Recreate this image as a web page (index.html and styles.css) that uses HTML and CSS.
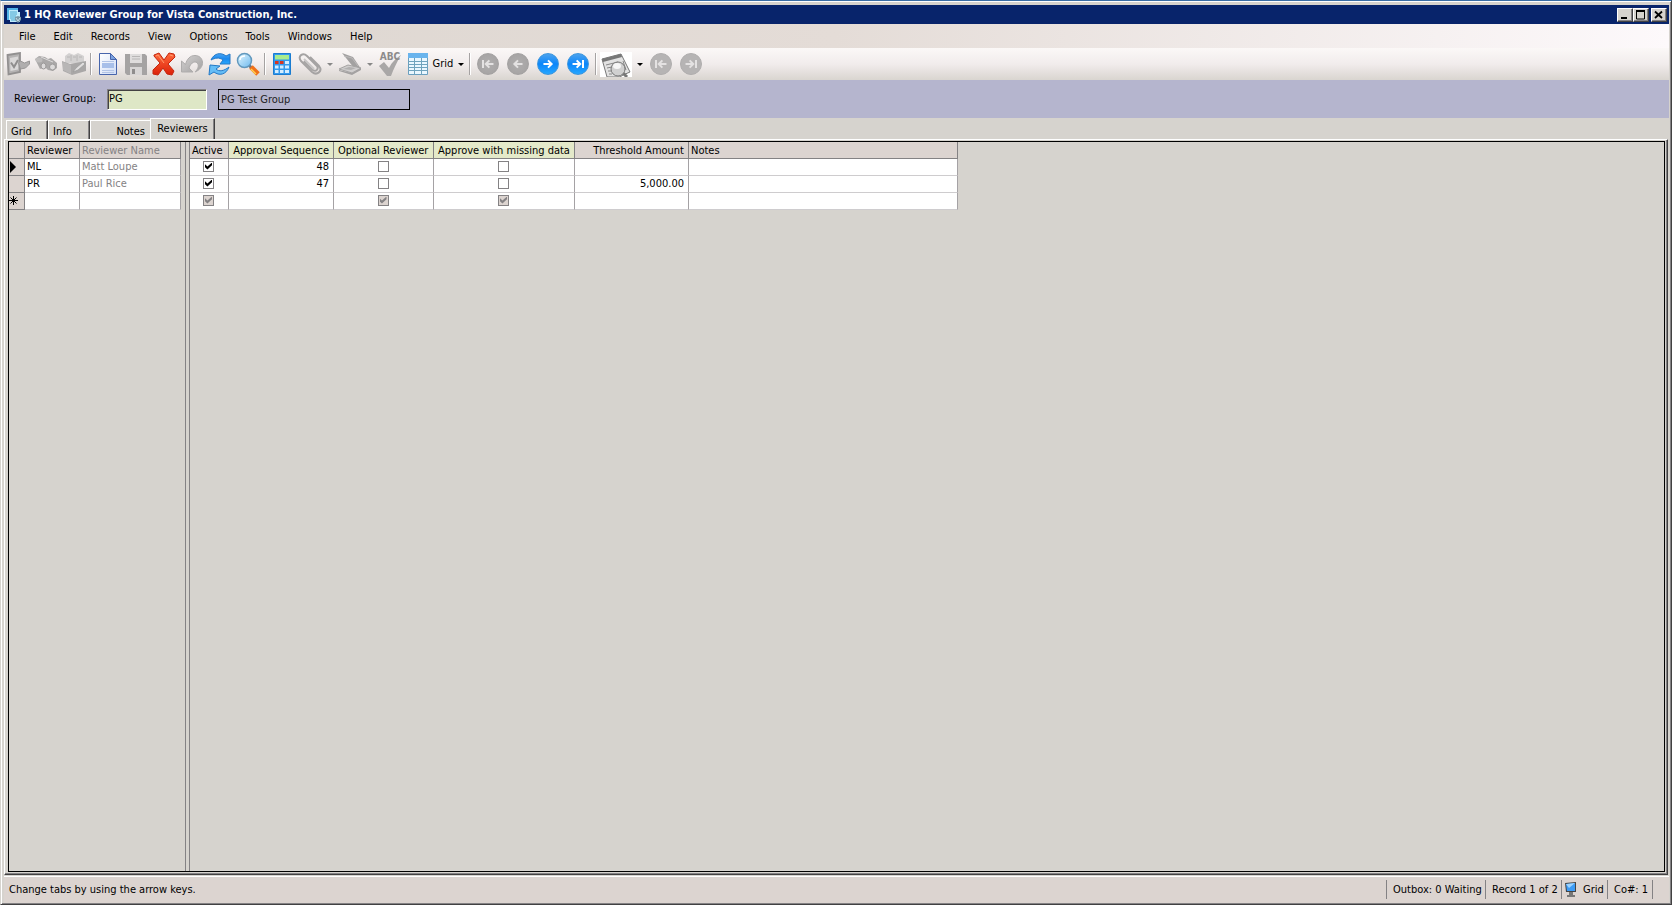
FILE: index.html
```html
<!DOCTYPE html>
<html lang="en">
<head>
<meta charset="utf-8">
<title>1 HQ Reviewer Group for Vista Construction, Inc.</title>
<link rel="stylesheet" href="styles.css">
</head>
<body>
<svg class="defs" aria-hidden="true">
  <defs>
    <linearGradient id="steel" x1="0" y1="0" x2="1" y2="1"><stop offset="0" stop-color="#d2d0d0"/><stop offset="1" stop-color="#a3a1a1"/></linearGradient>
    <linearGradient id="azure" x1="0" y1="0" x2="0" y2="1"><stop offset="0" stop-color="#4aa6f5"/><stop offset=".5" stop-color="#1a88ee"/><stop offset="1" stop-color="#27a8ff"/></linearGradient>
    <linearGradient id="sky" x1="0" y1="0" x2="1" y2="1"><stop offset="0" stop-color="#e4f7ff"/><stop offset="1" stop-color="#6db9ee"/></linearGradient>
    <linearGradient id="paper" x1="0" y1="0" x2="1" y2="1"><stop offset="0" stop-color="#fff"/><stop offset="1" stop-color="#cfdcf5"/></linearGradient>
    <linearGradient id="red" x1="0" y1="0" x2="0" y2="1"><stop offset="0" stop-color="#ff6b3d"/><stop offset="1" stop-color="#dc2008"/></linearGradient>
    <symbol id="to-first" viewBox="0 0 22 22"><path d="M5.500 6.500v9M17 11H9M12.500 7l-4 4 4 4" fill="none" stroke="currentColor" stroke-width="2.200"/></symbol>
    <symbol id="to-last" viewBox="0 0 22 22"><path d="M16.500 6.500v9M5 11h8M9.500 7l4 4-4 4" fill="none" stroke="currentColor" stroke-width="2.200"/></symbol>
  </defs>
</svg>
<div class="window">
  <header class="titlebar">
    <svg class="app-icon" viewBox="0 0 16 16" aria-hidden="true"><path d="M1 1h11v4h2v10H4v-2H1z" fill="#bfeafb"/><path d="M1 1h11v2H1zM1 1h2v12H1z" fill="#52b4e6"/><path d="M4 5h7M4 7h7M4 9h6M4 11h5M5 13h5" stroke="#4ba8cf"/><path d="M9 10l3-1 3 1v3l-3 3-3-3z" fill="#7797a8"/><path d="M10 11l2 3 2-3" stroke="#c7e1ec" fill="none"/></svg>
    <h1 class="title">1 HQ Reviewer Group for Vista Construction, Inc.</h1>
    <div class="window-buttons">
      <button class="win-btn" aria-label="Minimize"><svg viewBox="0 0 12 10"><path d="M2 8h6" stroke="#000" stroke-width="2"/></svg></button>
      <button class="win-btn" aria-label="Maximize"><svg viewBox="0 0 12 10"><path d="M1.500 1h8v8h-8z" fill="none" stroke="#000"/><path d="M1 1h9" stroke="#000" stroke-width="2"/></svg></button>
      <button class="win-btn close" aria-label="Close"><svg viewBox="0 0 12 10"><path d="M2 1.500l7 6.500M9 1.500L2 8" stroke="#000" stroke-width="1.800"/></svg></button>
    </div>
  </header>
  <nav class="menubar">
    <button>File</button><button>Edit</button><button>Records</button><button>View</button><button>Options</button><button>Tools</button><button>Windows</button><button>Help</button>
  </nav>
  <div class="toolbar" role="toolbar">
    <button class="tool" aria-label="Post"><svg viewBox="0 0 24 24"><path d="M1.500 3L14 1v19L2.500 22.500z" fill="#b5b3b3" stroke="#929090" stroke-width="1.800"/><path d="M4 6l8-1.500v13L4.500 19z" fill="#dad8d8"/><path d="M5 10.500l3 4.500 4-7" fill="none" stroke="#8f8d8d" stroke-width="2"/><path d="M23.500 9l-5 2-4-2-2 2 2 6 5-1 4-4z" fill="#b0aeae" stroke="#989696"/></svg></button>
    <button class="tool" aria-label="Find"><svg viewBox="0 0 24 24"><path d="M1 7l4-3 6 1 3 2 3-1 6 5v5l-4 3-5-1-3-3-5 2-2-4z" fill="#aaa8a8"/><ellipse cx="5" cy="8" rx="3.500" ry="2.500" fill="#bebcbc"/><ellipse cx="9.500" cy="14" rx="2.500" ry="3" fill="#dcdada" stroke="#9a9898"/><ellipse cx="18.500" cy="15" rx="3" ry="3" fill="#dcdada" stroke="#9a9898"/><path d="M7 5l7 3 5 2" stroke="#dddbdb" fill="none"/></svg></button>
    <button class="tool" aria-label="Records"><svg viewBox="0 0 24 24"><path d="M3 11V4l4-3 5 2 4-2 6 3v8z" fill="#d3d1d1"/><path d="M5 5h3M11 5h3M17 5h3M9 3v6M15 3v6" stroke="#b8b6b6"/><path d="M0 9l8 3 16-3v10l-14 4-9-4z" fill="#a9a7a7"/><path d="M1 10l8 3v9l-8-4z" fill="#b8b6b6"/><path d="M11 20l3-4 7-6 2 2-7 6z" fill="#e0dede" stroke="#999" stroke-width=".7"/></svg></button>
    <span class="sep"></span>
    <button class="tool" aria-label="New"><svg viewBox="0 0 24 24"><path d="M3.500 1.500h11l6 6v15h-17z" fill="url(#paper)" stroke="#4765ac"/><path d="M14.500 1.500v6h6z" fill="#7ba1df" stroke="#4765ac"/><path d="M6 9.500h12M6 18.500h12M6 20.500h12" stroke="#b2c4e6"/><path d="M6 11h12v5H6z" fill="#a7bfe9"/></svg></button>
    <button class="tool" aria-label="Save"><svg viewBox="0 0 24 24"><path d="M1 2h20l2 2v19H3l-2-2z" fill="#a5a3a3"/><path d="M6 2h12v9H6z" fill="#dfdddd"/><path d="M8 4.500h8M8 7h8" stroke="#b8b6b6"/><path d="M6 15h12v8H6z" fill="#d8d6d6"/><path d="M8 17h3v5H8z" fill="#8f8d8d"/></svg></button>
    <button class="tool" aria-label="Delete"><svg viewBox="0 0 24 24"><path d="M2 3l5-2 5 7 5-7 5 1 1 3-7 7 6 7-2 4-5-1-4-6-5 7-5-1v-4l7-7-6-7z" fill="url(#red)" stroke="#c3270f"/><path d="M4 4l2-1 6 8M18 3l3 1" fill="none" stroke="#ff9b70"/></svg></button>
    <button class="tool" aria-label="Undo"><svg viewBox="0 0 24 24"><path d="M1.500 9v11h11.500l-4-4C11 10 16 8 18 12c1 3-1 6-3 8 5-2 8-6 7.500-10C22 6 19 3.500 15 3.500 10 3.500 7 7 5.500 12.500z" fill="url(#steel)" stroke="#aeacac"/></svg></button>
    <button class="tool" aria-label="Refresh"><svg viewBox="0 0 24 24"><path d="M3 8c3-7 10-8 15-4l4-2v10H12l3-4c-4-3-8-2-12 0z" fill="url(#azure)" stroke="#2479c6"/><path d="M21 15c-3 8-10 9-15 5l-5 3 1-10 10 1-4 3c3 3 8 2 13-2z" fill="#65bdf6" stroke="#2479c6"/></svg></button>
    <button class="tool" aria-label="Search"><svg viewBox="0 0 24 24"><path d="M12 12l9 10" stroke="#73777d" stroke-width="3"/><path d="M15 15l7 7" stroke="#f07018" stroke-width="5"/><path d="M15 17l5 5" stroke="#ffd050" stroke-width="1.500"/><circle cx="8.500" cy="8.500" r="7" fill="url(#sky)" stroke="#6298bd" stroke-width="1.500"/><path d="M4 8c0-3 3-4 5-4" fill="none" stroke="#fff" stroke-width="1.500"/></svg></button>
    <span class="sep"></span>
    <button class="tool" aria-label="Calculator"><svg viewBox="0 0 24 24"><path d="M3.500 1.500h17v21h-17z" fill="#3399ec" stroke="#1b7cd0"/><path d="M5 3h14v4.500H5z" fill="#a9ec8d"/><path d="M5 9h3.500v3H5z" fill="#d83520"/><path d="M10 9h3.500v3H10z" fill="#d83520"/><path d="M15 9h4v3h-4zM5 13.500h3.500v3H5zM10 13.500h3.500v3H10zM15 13.500h4v3h-4zM5 18h3.500v3H5zM10 18h3.500v3H10zM15 18h4v3h-4z" fill="#d4edff"/></svg></button>
    <button class="tool" aria-label="Attachments"><svg viewBox="0 0 24 24"><path d="M6 9l9 9c3 2 6-1 4-4L9 4C5 0-1 4 3 9l11 11c5 4 11-1 7-6L12 5" fill="none" stroke="#a5a3a3" stroke-width="2"/><path d="M6 7l10 10" stroke="#c9c7c7" stroke-width="2"/></svg></button>
    <button class="drop dim" aria-label="Attachment options"></button>
    <button class="tool" aria-label="Scan"><svg viewBox="0 0 24 24"><path d="M4 1l11 4 8 12-7-1z" fill="#a3a1a1"/><path d="M6 4l8 2 6 8" stroke="#bbb9b9" fill="none"/><path d="M1 17l9-4 13 3-9 5z" fill="#cfcdcd" stroke="#a5a3a3"/><path d="M5 17l6-2 7 1-5 2z" fill="#b2b0b0"/><path d="M1 18l13 3 9-5v2l-9 5-13-4z" fill="#a3a1a1"/></svg></button>
    <button class="drop dim" aria-label="Scan options"></button>
    <button class="tool spell" aria-label="Spelling"><svg viewBox="0 0 24 24"><path d="M1 14l5-4 5 6C14 10 18 6 23 3c-4 7-7 13-10 21H9z" fill="#a9a7a7"/></svg><span>ABC</span></button>
    <button class="tool gridtool"><svg viewBox="0 0 24 24"><path d="M2.500 2.500h19v20h-19z" fill="#e9f7ff" stroke="#6a9fbf"/><path d="M2 1h20v5H2z" fill="#69b4ed"/><path d="M2 9.500h20M2 12.500h20M2 15.500h20M2 18.500h20M8.500 6v17M15.500 6v17" stroke="#6fa3bd"/></svg><span>Grid</span></button>
    <button class="drop" aria-label="Grid options"></button>
    <span class="sep"></span>
    <button class="round" aria-label="First"><svg><use href="#to-first"/></svg></button>
    <button class="round" aria-label="Previous"><svg viewBox="0 0 22 22"><path d="M16 11H7.500M11 7l-4 4 4 4" fill="none" stroke="currentColor" stroke-width="2.200"/></svg></button>
    <button class="round live" aria-label="Next"><svg viewBox="0 0 22 22"><path d="M6 11h8.500M11 7l4 4-4 4" fill="none" stroke="currentColor" stroke-width="2.200"/></svg></button>
    <button class="round live" aria-label="Last"><svg><use href="#to-last"/></svg></button>
    <span class="sep"></span>
    <button class="preview" aria-label="Preview"><svg viewBox="0 0 32 25"><path d="M2 7l19-5 9 18-7 3-3 2H7z" fill="#e2e2e2" stroke="#777"/><path d="M2 7l19-5 1 3-19 5z" fill="#777"/><path d="M6 13l12-3M7 16l5-1M8 19h4M9 22h3M23 9l3 9" stroke="#888"/><path d="M23 21l4 4" stroke="#777" stroke-width="3"/><circle cx="18" cy="17" r="7" fill="#d0d0d0" stroke="#777"/><ellipse cx="17" cy="14" rx="4" ry="3" fill="#f6f6f6"/></svg></button>
    <button class="drop" aria-label="Preview options"></button>
    <button class="round faint" aria-label="First page"><svg><use href="#to-first"/></svg></button>
    <button class="round faint" aria-label="Last page"><svg><use href="#to-last"/></svg></button>
  </div>
  <form class="keybar">
    <label for="group">Reviewer Group:</label>
    <input id="group" class="key" value="PG">
    <input class="desc" aria-label="Group description" value="PG Test Group" readonly>
  </form>
  <div class="tabs" role="tablist">
    <button class="tab" role="tab">Grid</button><button class="tab" role="tab">Info</button><button class="tab notes" role="tab">Notes</button><button class="tab current" role="tab" aria-selected="true">Reviewers</button>
  </div>
  <main class="panel">
    <div class="sheet">
      <table class="fixed-cols">
        <colgroup><col class="w-mark"><col class="w-rev"><col class="w-name"></colgroup>
        <thead><tr><th></th><th>Reviewer</th><th class="muted">Reviewer Name</th></tr></thead>
        <tbody>
          <tr><td class="mark"><svg viewBox="0 0 14 16"><path d="M1 2l6 6-6 6z"/></svg></td><td>ML</td><td class="muted">Matt Loupe</td></tr>
          <tr><td class="mark"></td><td>PR</td><td class="muted">Paul Rice</td></tr>
          <tr><td class="mark"><svg viewBox="0 0 14 16"><path d="M4.500 3v9M0 7.500h9M1.500 4.500l6 6M7.500 4.500l-6 6" stroke="#000" fill="none"/></svg></td><td></td><td></td></tr>
        </tbody>
      </table>
      <div class="splitter"></div>
      <table class="scroll-cols">
        <colgroup><col class="w-act"><col class="w-seq"><col class="w-opt"><col class="w-app"><col class="w-thr"><col class="w-note"></colgroup>
        <thead><tr><th>Active</th><th class="key-col num">Approval Sequence</th><th class="key-col">Optional Reviewer</th><th class="key-col mid">Approve with missing data</th><th class="num">Threshold Amount</th><th>Notes</th></tr></thead>
        <tbody>
          <tr><td class="mid"><input type="checkbox" aria-label="Active" checked></td><td class="num">48</td><td class="mid"><input type="checkbox" aria-label="Optional Reviewer"></td><td class="mid"><input type="checkbox" aria-label="Approve with missing data"></td><td></td><td></td></tr>
          <tr><td class="mid"><input type="checkbox" aria-label="Active" checked></td><td class="num">47</td><td class="mid"><input type="checkbox" aria-label="Optional Reviewer"></td><td class="mid"><input type="checkbox" aria-label="Approve with missing data"></td><td class="num">5,000.00</td><td></td></tr>
          <tr><td class="mid"><input type="checkbox" aria-label="Active" checked disabled></td><td></td><td class="mid"><input type="checkbox" aria-label="Optional Reviewer" checked disabled></td><td class="mid"><input type="checkbox" aria-label="Approve with missing data" checked disabled></td><td></td><td></td></tr>
        </tbody>
      </table>
    </div>
  </main>
  <footer class="status">
    <span class="hint">Change tabs by using the arrow keys.</span>
    <span class="cell outbox">Outbox: 0 Waiting</span>
    <span class="cell record">Record 1 of 2</span>
    <span class="cell mode"><svg viewBox="0 0 12 16" aria-hidden="true"><path d="M0 1l11-1v10H1z" fill="#444"/><path d="M1 2l9-1v8H2z" fill="#3c9bf5"/><path d="M1 2l9-1-6 5z" fill="#9cd3ff"/><path d="M4 10h4v3h2v2H2v-2h2z" fill="#777"/></svg>Grid</span>
    <span class="cell co">Co#: 1</span>
    <span class="cell grip"></span>
  </footer>
</div>
</body>
</html>
```
FILE: styles.css
```css
* { box-sizing: border-box; }
html, body { height: 100%; }
body {
  margin: 0;
  background: #d6d3ce;
  color: #000;
  font: 11px/14px "DejaVu Sans Condensed", "Noto Sans", sans-serif;
}
button, input { font: inherit; color: inherit; margin: 0; padding: 0; border: 0; background: none; border-radius: 0; }
svg { display: block; }
.defs { position: absolute; width: 0; height: 0; }

.window {
  min-height: 100vh;
  display: flex;
  flex-direction: column;
  border-top: 1px solid #3a6ea5;
  border-left: 1px solid #d6d3ce;
  border-right: 1px solid #424142;
  border-bottom: 1px solid #424142;
  padding: 3px 2px 1px;
  box-shadow: inset 1px 1px #fff, inset -1px -1px #848284;
}

.titlebar {
  display: flex;
  align-items: center;
  height: 19px;
  margin: 1px 0 0 1px;
  padding: 0 2px;
  background: #08246b;
  color: #fff;
}
.app-icon { width: 16px; height: 16px; margin-right: 2px; }
.title { margin: 0; flex: 1; font-size: 11px; line-height: 14px; font-weight: bold; }
.window-buttons { display: flex; }
.win-btn {
  width: 16px; height: 14px;
  display: flex; align-items: center; justify-content: center;
  background: #d6d3ce;
  border: 1px solid;
  border-color: #fff #424142 #424142 #fff;
  box-shadow: inset -1px -1px #848284;
}
.win-btn svg { width: 12px; height: 10px; }
.close { margin-left: 2px; }

.menubar {
  display: flex;
  height: 24px;
  margin-left: 1px;
  padding-left: 6px;
  background: linear-gradient(90deg, #dcd6d0, #e4dcd7 50%, #fdf9fb);
}
.menubar button { padding: 1px 9px 0; }

.toolbar {
  display: flex;
  align-items: center;
  height: 32px;
  margin-left: 1px;
  background: linear-gradient(#fbf8f7, #f1ecec 50%, #d9d5d0);
}
.tool { width: 28px; height: 28px; display: flex; align-items: center; justify-content: center; }
.tool svg { width: 24px; height: 24px; flex: none; }
.sep { width: 2px; height: 22px; margin: 0 2px; background: #a5a2a2; border-right: 1px solid #fff; }
.drop { width: 12px; height: 24px; display: flex; align-items: center; justify-content: center; }
.drop::before { content: ""; border: 3px solid transparent; border-top-color: #000; border-bottom: 0; }
.dim::before { border-top-color: #888; }
.spell { display: grid; place-items: center; }
.spell span, .spell svg { grid-area: 1 / 1; }
.spell span { align-self: start; color: #8d8b8b; font-size: 10px; line-height: 14px; font-weight: bold; }
.gridtool { width: 51px; gap: 3px; }
.round { width: 30px; height: 28px; display: flex; align-items: center; justify-content: center; color: #e4e2e2; }
.round svg { width: 22px; height: 22px; border-radius: 50%; background: radial-gradient(#b0aeae, #a3a1a1); border: 1px solid #a3a1a1; }
.live { color: #fff; }
.live svg { background: linear-gradient(#4ba2ee, #0b86fa 50%, #25a6ff); border-color: #3b95dd; }
.faint svg { background: #b6b4b4; border-color: #b0aeae; }
.preview { padding: 0 2px 0 1px; }
.preview svg { width: 32px; height: 25px; background: #fff; }

.keybar {
  display: flex;
  align-items: center;
  height: 38px;
  margin-left: 1px;
  padding-left: 10px;
  background: #b5b5ce;
}
.keybar label { width: 93px; }
.key {
  width: 100px; height: 21px;
  padding: 0 1px 2px;
  background: #dee7c6;
  border: 1px solid;
  border-color: #848284 #fff #fff #848284;
  box-shadow: inset 1px 1px #424142;
}
.desc { width: 192px; height: 21px; margin-left: 11px; padding: 0 2px; border: 1px solid #000; color: #222; }

.tabs { display: flex; align-items: flex-end; height: 21px; padding-left: 3px; }
.tab {
  height: 19px;
  width: 42px;
  padding: 3px 0 0 4px;
  text-align: left;
  border-top: 1px solid #fff;
  border-left: 1px solid #fff;
  border-right: 1px solid #424142;
  box-shadow: inset -1px 0 #848284;
}
.notes { width: 60px; padding: 3px 5px 0 0; text-align: right; border-right: 0; box-shadow: none; }
.current { height: 21px; width: 65px; padding: 0; text-align: center; }

.panel {
  flex: 1;
  display: flex;
  margin: 0 1px 0 1px;
  padding: 1px 2px 2px 3px;
  border: 1px solid;
  border-color: #fff #424142 #424142 #fff;
  box-shadow: inset -1px -1px #848284;
}
.sheet { flex: 1; display: flex; border: 1px solid #000; align-items: stretch; }
.splitter { width: 5px; margin-left: 4px; border: 1px solid #848284; border-width: 0 1px; }
table { border-collapse: separate; border-spacing: 0; table-layout: fixed; align-self: flex-start; }
.fixed-cols { width: 172px; }
.scroll-cols { width: 768px; }
.w-mark { width: 16px; }
.w-rev { width: 55px; }
.w-name { width: 101px; }
.w-act { width: 39px; }
.w-seq { width: 105px; }
.w-opt { width: 100px; }
.w-app { width: 141px; }
.w-thr { width: 114px; }
.w-note { width: 269px; }
th, td { height: 17px; padding: 0 2px; line-height: 14px; text-align: left; white-space: nowrap; font-weight: normal; }
th { padding-top: 1px; background: #dcd4d0; border-right: 1px solid #848284; border-bottom: 1px solid #848284; }
td { background: #fff; border-right: 1px solid #a5a2a5; border-bottom: 1px solid #ceccce; }
.key-col { background: #e4e9c9; padding: 1px 4px 0; }
.muted { color: #848284; }
.num { text-align: right; padding-left: 4px; padding-right: 4px; }
.mid { text-align: center; }
.mark { padding: 0; background: #dcd4d0; border-color: #848284; }
.mark svg { width: 14px; height: 16px; }
td input {
  appearance: none;
  display: block;
  width: 11px; height: 11px;
  margin: 0 auto 2px;
  border: 1px solid #848284;
  background: #fff;
}
td.mid { padding: 0 3px 0 2px; }
td input:checked::before {
  content: "";
  display: block;
  width: 7px; height: 7px;
  margin: 1px;
  background: #000;
  clip-path: polygon(0 25%, 35% 58%, 100% 0, 100% 40%, 35% 100%, 0 68%);
}
td input:disabled { background: #dcd4d0; }
td input:disabled::before { background: #848284; }

.status {
  display: flex;
  align-items: center;
  height: 27px;
  margin-top: 1px;
  margin-left: 1px;
  padding: 0 15px 1px 5px;
  border-top: 1px solid #fff;
  background: #dcd4d0;
}
.hint { flex: 1; }
.cell { height: 19px; display: flex; align-items: center; border-left: 1px solid #848284; white-space: nowrap; }
.outbox { width: 99px; padding-left: 6px; }
.record { width: 76px; padding-left: 6px; }
.mode { width: 46px; padding-left: 3px; gap: 6px; }
.mode svg { width: 12px; height: 16px; }
.co { width: 45px; padding-left: 6px; }
.grip { width: 2px; }
```
